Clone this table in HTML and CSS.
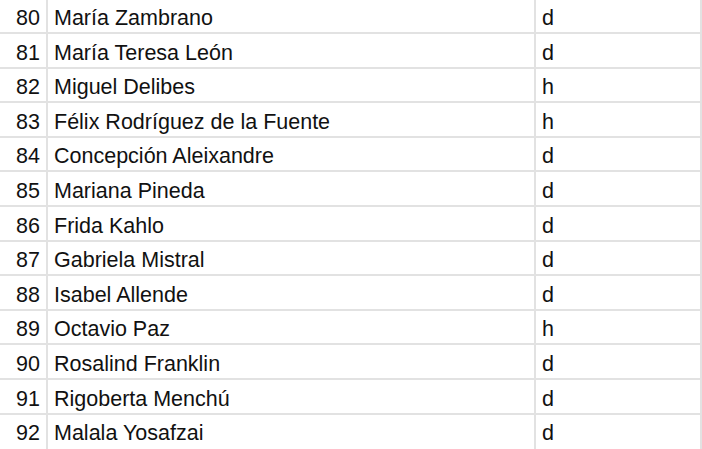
FILE: index.html
```html
<!DOCTYPE html>
<html lang="es">
<head>
<meta charset="utf-8">
<link rel="stylesheet" href="styles.css">
</head>
<body>
<div class="sheet">
  <div class="row"><div class="num">80</div><div class="name">María Zambrano</div><div class="g">d</div></div>
  <div class="row"><div class="num">81</div><div class="name">María Teresa León</div><div class="g">d</div></div>
  <div class="row"><div class="num">82</div><div class="name">Miguel Delibes</div><div class="g">h</div></div>
  <div class="row"><div class="num">83</div><div class="name">Félix Rodríguez de la Fuente</div><div class="g">h</div></div>
  <div class="row"><div class="num">84</div><div class="name">Concepción Aleixandre</div><div class="g">d</div></div>
  <div class="row"><div class="num">85</div><div class="name">Mariana Pineda</div><div class="g">d</div></div>
  <div class="row"><div class="num">86</div><div class="name">Frida Kahlo</div><div class="g">d</div></div>
  <div class="row"><div class="num">87</div><div class="name">Gabriela Mistral</div><div class="g">d</div></div>
  <div class="row"><div class="num">88</div><div class="name">Isabel Allende</div><div class="g">d</div></div>
  <div class="row"><div class="num">89</div><div class="name">Octavio Paz</div><div class="g">h</div></div>
  <div class="row"><div class="num">90</div><div class="name">Rosalind Franklin</div><div class="g">d</div></div>
  <div class="row"><div class="num">91</div><div class="name">Rigoberta Menchú</div><div class="g">d</div></div>
  <div class="row last"><div class="num">92</div><div class="name">Malala Yosafzai</div><div class="g">d</div></div>
</div>
</body>
</html>
```
FILE: styles.css
```css
html, body {
  margin: 0;
  padding: 0;
  background: #ffffff;
  overflow: hidden;
}
.sheet {
  margin-top: -0.5px;
  width: 702px;
  font-family: "Liberation Sans", Arial, sans-serif;
  font-size: 21.5px;
  color: #111111;
}
.row {
  display: grid;
  grid-template-columns: 48px 488px 166px;
  height: 34.6px;
}
.row > div {
  box-sizing: border-box;
  border-right: 2px solid #e2e2e2;
  border-bottom: 2px solid #e2e2e2;
  display: flex;
  align-items: flex-end;
  line-height: 23px;
  padding-bottom: 2px;
  white-space: nowrap;
}
.row.last > div {
  border-bottom: none;
  padding-bottom: 4px;
}
.num {
  justify-content: flex-end;
  padding-right: 6px;
}
.name {
  padding-left: 6px;
}
.g {
  padding-left: 6px;
}
```
